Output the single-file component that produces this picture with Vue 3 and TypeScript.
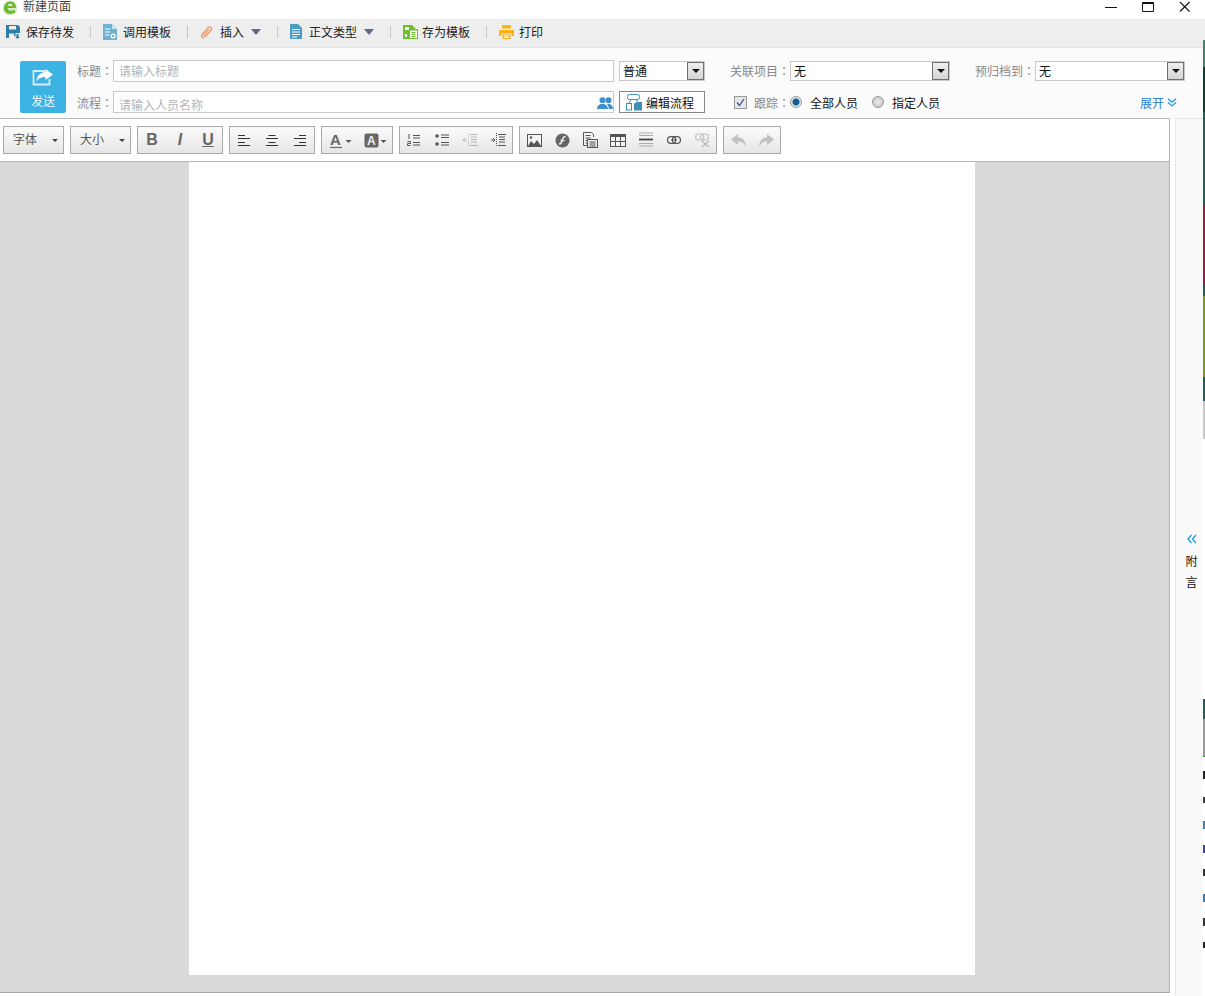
<template>
  <div class="win">
    <div class="titlebar">
      <svg class="logo" width="18" height="16" viewBox="0 0 18 16">
        <circle cx="9" cy="8" r="7.6" fill="#dfe8d8" />
        <path d="M3 8.5C3 4 6 1.5 9.5 1.5c3.5 0 5.5 2.5 5.5 6.5H6.5c.3 2.8 4 3.6 7.5 1.8v3C9.5 15 3 14 3 8.5z" fill="#6cbb2a" />
        <path d="M6.5 5.8h5.2C11.3 3.5 7.2 3.5 6.5 5.8z" fill="#fff" />
      </svg>
      <span class="title">新建页面</span>
      <div class="winbtns">
        <svg width="12" height="12" viewBox="0 0 12 12"><path d="M0 7.5h12" stroke="#111" /></svg>
        <svg width="12" height="12" viewBox="0 0 12 12"><path d="M.5 2.5h11v9H.5zM.5 3.5h11" fill="none" stroke="#111" /></svg>
        <svg width="12" height="12" viewBox="0 0 12 12"><path d="M1 2l9.5 9.500M10.500 2L1 11.500" stroke="#111" stroke-width="1.1" /></svg>
      </div>
    </div>

    <div class="actions">
      <div class="act act-save">
        <svg width="14" height="14" viewBox="0 0 14 14">
          <path d="M0 0h12l2 2v6H9.5v3H7v2H0z" fill="#2e7ea8" />
          <path d="M3 1h7v3.5H3z" fill="#eee" />
          <path d="M3 8.5h5V13H3z" fill="#eee" />
          <path d="M10.5 9h2v2.5H14L11.5 14 9 11.5h1.5z" fill="#2e7ea8" />
        </svg>
        <span>保存待发</span>
      </div>
      <i class="sep"></i>
      <div class="act act-tpl">
        <svg width="14" height="16" viewBox="0 0 14 16">
          <path d="M0 0h9l5 5v11H0z" fill="#6fb1d0" />
          <path d="M9 0v5h5z" fill="#cfe4ee" />
          <path d="M2 5h5M2 8h5M2 11h4" stroke="#fff" />
          <circle cx="10" cy="12" r="2.5" fill="#fff" />
          <circle cx="10" cy="12" r="1.2" fill="#6fb1d0" />
        </svg>
        <span>调用模板</span>
      </div>
      <i class="sep"></i>
      <div class="act act-ins">
        <svg width="14" height="14" viewBox="0 0 14 14">
          <path d="M4 13.2c-2 0-3.3-2-2-3.7l6-6.8c1.7-1.8 4.800.5 3 2.800L5.500 11.300c-1 1-2.300-.1-1.500-1.200l5-5.600" fill="none" stroke="#ee9a6b" stroke-width="1.3" />
        </svg>
        <span>插入</span>
        <i class="tri"></i>
      </div>
      <i class="sep"></i>
      <div class="act act-type">
        <svg width="12" height="15" viewBox="0 0 12 15">
          <path d="M0 0h8l4 4v11H0z" fill="#4c9cc4" />
          <path d="M2 5.5h8M2 8h8M2 10.5h8M2 13h5" stroke="#fff" />
        </svg>
        <span>正文类型</span>
        <i class="tri"></i>
      </div>
      <i class="sep"></i>
      <div class="act act-as">
        <svg width="15" height="14" viewBox="0 0 15 14">
          <path d="M0 0h9l3 3v1h3v10H0z" fill="#6cc12e" />
          <path d="M2 2h4v3H2zM2 9h2v3H2z" fill="#fff" />
          <path d="M7 5.5h7V13H7z" fill="#fff" />
          <path d="M8.500 7.500h4M8.500 9.500h4M8.500 11.500h4" stroke="#6cc12e" />
        </svg>
        <span>存为模板</span>
      </div>
      <i class="sep"></i>
      <div class="act act-print">
        <svg width="15" height="14" viewBox="0 0 15 14">
          <path d="M3 0h9v3.5H3z" fill="#fdb316" />
          <path d="M0 5h15v6h-2.5V8.500h-10V11H0z" fill="#fdb316" />
          <path d="M3.500 9.500h8V14h-8z" fill="#fdb316" />
          <path d="M5 11h5M5 12.500h5" stroke="#fff" />
        </svg>
        <span>打印</span>
      </div>
    </div>

    <div class="form">
      <div class="send">
        <svg width="22" height="17" viewBox="0 0 22 17">
          <path d="M13 2H1.500v13.500h16V10" fill="none" stroke="#d6eefa" stroke-width="1.8" />
          <path d="M13.500 0L21 5.500 13.500 11V8C9 8 6 9.500 4.500 12.500 4.500 7 8 3.500 13.500 3z" fill="#fff" />
        </svg>
        <span>发送</span>
      </div>
      <div class="fields">
        <div class="row">
          <label class="lab lab-l">标题<span class="colon">：</span></label>
          <div class="input ph">请输入标题</div>
          <div class="select sel-level"><span>普通</span><b class="arrow"></b></div>
          <label class="lab lab-wide">关联项目<span class="colon">：</span></label>
          <div class="select sel-proj"><span>无</span><b class="arrow"></b></div>
          <label class="lab lab-wide">预归档到<span class="colon">：</span></label>
          <div class="select sel-arch"><span>无</span><b class="arrow"></b></div>
        </div>
        <div class="row">
          <label class="lab lab-l lab-low">流程<span class="colon">：</span></label>
          <div class="input ph flow">
            <span>请输入人员名称</span>
            <svg class="people" width="16" height="12" viewBox="0 0 16 12">
              <circle cx="5.5" cy="3.2" r="3" fill="#3f8fcb" />
              <circle cx="11.5" cy="3.2" r="3" fill="#3f8fcb" />
              <path d="M0 12c0-3 2-5 5.500-5S11 9 11 12zM11.800 12c0-2-.5-3.500-1.800-4.800 3.500-1 6 1.300 6 4.800z" fill="#3f8fcb" />
            </svg>
          </div>
          <div class="flowbtn">
            <svg width="17" height="17" viewBox="0 0 17 17">
              <rect x="1.5" y=".5" width="12" height="5" rx="2" fill="none" stroke="#3f8fb5" />
              <path d="M5 5.500L3 9M10 5.500l2 3" stroke="#3f8fb5" />
              <rect x=".5" y="9.5" width="5" height="6.5" fill="none" stroke="#3f8fb5" />
              <path d="M8 9.500l3-1.500h5v8.500H8z" fill="#3f8fb5" />
            </svg>
            <span>编辑流程</span>
          </div>
          <span class="check">
            <svg width="13" height="13" viewBox="0 0 13 13">
              <rect x=".5" y=".5" width="12" height="12" fill="#e6e6ea" stroke="#9a9a9a" />
              <path d="M3 6.500l2.500 3L10 3" fill="none" stroke="#3c4a9e" stroke-width="1.3" />
            </svg>
          </span>
          <label class="lab lab-track">跟踪<span class="colon">：</span></label>
          <i class="radio on"></i>
          <span class="opt opt1">全部人员</span>
          <i class="radio"></i>
          <span class="opt">指定人员</span>
          <span class="expand">展开
            <svg width="10" height="9" viewBox="0 0 10 9"><path d="M1 .8l4 3.400L9 .8M1 4.500l4 3.400 4-3.400" fill="none" stroke="#1c9cea" stroke-width="1.3" /></svg>
          </span>
        </div>
      </div>
    </div>

    <div class="main">
      <div class="editor">
        <div class="tools">
          <div class="group combo"><span>字体</span><i class="caret"></i></div>
          <div class="group combo"><span>大小</span><i class="caret"></i></div>

          <div class="group">
            <span class="tb letter b">B</span>
            <span class="tb letter it">I</span>
            <span class="tb letter u">U</span>
          </div>

          <div class="group">
            <span v-for="a in aligns" :key="a" class="tb">
              <svg width="12" height="13" viewBox="0 0 12 13">
                <path :d="a" stroke="#333" stroke-width="1.2" fill="none" />
              </svg>
            </span>
          </div>

          <div class="group colors">
            <span class="tb wide">
              <svg width="24" height="17" viewBox="0 0 24 17">
                <text x="2" y="13" font-family="Liberation Sans" font-weight="700" font-size="15" fill="#666">A</text>
                <path d="M2 15.500h12" stroke="#666" stroke-width="1.2" />
                <path d="M17.500 8h6l-3 3z" fill="#555" />
              </svg>
            </span>
            <span class="tb wide">
              <svg width="24" height="17" viewBox="0 0 24 17">
                <rect x="1.5" y="1.5" width="14" height="14" rx="2" fill="#666" />
                <text x="4" y="13" font-family="Liberation Sans" font-weight="700" font-size="12" fill="#eee">A</text>
                <path d="M17.500 8h6l-3 3z" fill="#555" />
              </svg>
            </span>
          </div>

          <div class="group">
            <span class="tb">
              <svg width="14" height="14" viewBox="0 0 14 14">
                <path d="M6 2.500h7M6 5h7M6 9.500h7M6 12h7" stroke="#555" />
                <path d="M2 1v5M.5 8.500h3v2h-3v2h3" fill="none" stroke="#555" />
              </svg>
            </span>
            <span class="tb">
              <svg width="14" height="14" viewBox="0 0 14 14">
                <circle cx="2" cy="3" r="1.8" fill="#555" />
                <circle cx="2" cy="11" r="1.8" fill="#555" />
                <path d="M6 2h8M6 4.500h8M6 9.500h8M6 12h8" stroke="#555" />
              </svg>
            </span>
            <span class="tb faded">
              <svg width="15" height="14" viewBox="0 0 15 14">
                <path d="M7 1.500h8M8 4h6M8 6.500h6M8 9h6M7 12.500h8" stroke="#777" />
                <path d="M5.500 0v14" stroke="#777" stroke-dasharray="1 1" />
                <path d="M0 7h4M2 5L0 7l2 2" fill="none" stroke="#777" />
              </svg>
            </span>
            <span class="tb">
              <svg width="15" height="14" viewBox="0 0 15 14">
                <path d="M7 1.500h8M8 4h6M8 6.500h6M8 9h6M7 12.500h8" stroke="#555" />
                <path d="M5.500 0v14" stroke="#555" stroke-dasharray="1 1" />
                <path d="M0 7h4M2 5l2 2-2 2" fill="none" stroke="#555" />
              </svg>
            </span>
          </div>

          <div class="group">
            <span class="tb">
              <svg width="15" height="13" viewBox="0 0 15 13">
                <rect x=".5" y=".5" width="14" height="12" fill="#f4f4f4" stroke="#555" />
                <path d="M1 12l3-5 3 3 3-4 4 6z" fill="#555" />
                <circle cx="4" cy="3.5" r="1.3" fill="#555" />
              </svg>
            </span>
            <span class="tb">
              <svg width="15" height="15" viewBox="0 0 15 15">
                <circle cx="7.5" cy="7.5" r="7" fill="#666" />
                <path d="M10.500 3.500C7.800 3.500 7.500 5.500 7 8c-.4 2-1 3-3 3M5.500 7.500h4" fill="none" stroke="#eee" stroke-width="1.3" />
              </svg>
            </span>
            <span class="tb">
              <svg width="15" height="16" viewBox="0 0 15 16">
                <path d="M.5.500h8l2 2V5M.5.500v13H4" fill="none" stroke="#555" />
                <path d="M2.500 3.500h5M2.500 6h5M2.500 8.500h2M2.500 11h1.500" stroke="#555" />
                <rect x="4.5" y="7.5" width="10" height="8" fill="#eee" stroke="#555" />
                <path d="M6.500 10h6M6.500 12h6M6.500 14h6" stroke="#555" />
              </svg>
            </span>
            <span class="tb">
              <svg width="16" height="13" viewBox="0 0 16 13">
                <rect x=".5" y=".5" width="15" height="12" fill="#f4f4f4" stroke="#555" />
                <path d="M0 .5h16V3H0z" fill="#555" />
                <path d="M5.500 3v9M10.500 3v9M1 7.500h14" stroke="#555" />
              </svg>
            </span>
            <span class="tb">
              <svg width="14" height="16" viewBox="0 0 14 16">
                <path d="M0 1h14M0 3.500h14M0 11.500h14M0 14h14" stroke="#aaa" />
                <path d="M0 7.500h14" stroke="#444" stroke-width="1.8" />
              </svg>
            </span>
            <span class="tb">
              <svg width="14" height="8" viewBox="0 0 14 8">
                <rect x=".6" y=".6" width="8" height="6.8" rx="3.2" fill="none" stroke="#555" stroke-width="1.2" />
                <rect x="5.4" y=".6" width="8" height="6.8" rx="3.2" fill="none" stroke="#555" stroke-width="1.2" />
                <path d="M4 4h6" stroke="#555" />
              </svg>
            </span>
            <span class="tb faded">
              <svg width="15" height="14" viewBox="0 0 15 14">
                <rect x=".7" y="1" width="8" height="6" rx="2.5" fill="none" stroke="#888" stroke-width="1.2" />
                <rect x="5.5" y="1" width="8" height="6" rx="2.5" fill="none" stroke="#888" stroke-width="1.2" />
                <path d="M7 8l7 6M14 8l-7 6" stroke="#777" stroke-width="1.4" />
              </svg>
            </span>
          </div>

          <div class="group">
            <span class="tb faded">
              <svg width="15" height="13" viewBox="0 0 15 13">
                <path d="M7 0L0 5.500 7 11V7.500c3.500 0 6 1.300 8 5C14.800 7 11.500 3.500 7 3.300z" fill="#888" />
              </svg>
            </span>
            <span class="tb faded">
              <svg width="15" height="13" viewBox="0 0 15 13">
                <path d="M8 0l7 5.500L8 11V7.500c-3.500 0-6 1.300-8 5C.2 7 3.500 3.500 8 3.300z" fill="#888" />
              </svg>
            </span>
          </div>
        </div>
        <div class="canvas">
          <div class="paper"></div>
        </div>
      </div>

      <div class="aside">
        <svg width="10" height="10" viewBox="0 0 10 10"><path d="M4.500 1L1 5l3.500 4M9 1L5.500 5 9 9" fill="none" stroke="#1c9cea" stroke-width="1.3" /></svg>
        <span class="aside-t">附</span>
        <span class="aside-t">言</span>
      </div>
    </div>

    <div class="strip">
      <i v-for="(s, n) in strip" :key="n" :style="{ height: s.h + 'px', background: s.c }"></i>
    </div>
  </div>
</template>

<script setup lang="ts">
const aligns: string[] = [
  "M0 1.5h7M0 4.5h12M0 8.5h7M0 11.5h12",
  "M2.5 1.5h7M0 4.5h12M2.5 8.5h7M0 11.5h12",
  "M5 1.5h7M0 4.5h12M5 8.5h7M0 11.5h12",
];

// colored edge of whatever window sat behind this one, top to bottom from y=40
const strip: { h: number; c: string }[] = [
  { h: 27, c: "#3d8a6e" },
  { h: 45, c: "#123a30" },
  { h: 93, c: "#1f5f5c" },
  { h: 81, c: "#a0154e" },
  { h: 10, c: "#1f5f5c" },
  { h: 81, c: "#7f9f0a" },
  { h: 24, c: "#1f5f5c" },
  { h: 38, c: "#c8c8c8" },
  { h: 260, c: "#ffffff" },
  { h: 20, c: "#1f5f5c" },
  { h: 37, c: "#9a9a9a" },
  { h: 1, c: "#2f8f2a" },
  { h: 14, c: "#ffffff" },
  { h: 8, c: "#222222" },
  { h: 18, c: "#ffffff" },
  { h: 6, c: "#444444" },
  { h: 18, c: "#ffffff" },
  { h: 8, c: "#3a7db0" },
  { h: 16, c: "#ffffff" },
  { h: 8, c: "#3b4a9a" },
  { h: 16, c: "#ffffff" },
  { h: 7, c: "#333333" },
  { h: 18, c: "#ffffff" },
  { h: 8, c: "#3a7db0" },
  { h: 16, c: "#ffffff" },
  { h: 8, c: "#333333" },
  { h: 16, c: "#ffffff" },
  { h: 6, c: "#222222" },
];
</script>

<style>
html,
body {
  margin: 0;
  background: #fff;
  overflow: hidden;
}
</style>

<style scoped>
.win {
  width: 1205px;
  height: 996px;
  position: relative;
  display: flex;
  flex-direction: column;
  font-family: "Noto Sans CJK SC", "Liberation Sans", sans-serif;
  font-size: 12px;
  color: #222;
  overflow: hidden;
}
.titlebar {
  height: 19px;
  display: flex;
  align-items: flex-start;
  background: #fff;
  flex: none;
}
.logo {
  margin-left: 1px;
}
.title {
  margin-left: 4px;
  font-family: "Liberation Sans", "Noto Sans CJK SC", sans-serif;
  line-height: 14px;
  color: #444;
}
.winbtns {
  margin-left: auto;
  margin-right: 14px;
  display: flex;
  gap: 25px;
}
.actions {
  height: 28px;
  background: #eeeeee;
  border-bottom: 1px solid #e4e4e4;
  display: flex;
  align-items: center;
  flex: none;
}
.act {
  display: flex;
  align-items: center;
  margin-top: -3px;
}
.act svg {
  margin-right: 6px;
}
.act-type svg {
  margin-right: 7px;
}
.act-as svg {
  margin-right: 4px;
}
.act-print svg {
  margin-right: 5px;
}
.act-save {
  padding-left: 6px;
}
.sep {
  width: 1px;
  height: 12px;
  background: #c4c4c4;
  margin: -3px 12px 0 16px;
  flex: none;
}
.tri {
  width: 0;
  height: 0;
  border-left: 5px solid transparent;
  border-right: 5px solid transparent;
  border-top: 6px solid #5e6b85;
  margin-left: 7px;
}
.form {
  height: 70px;
  background: #fbfbfb;
  display: flex;
  flex: none;
  box-sizing: border-box;
  padding: 12px 0 0 20px;
}
.send {
  width: 46px;
  height: 52px;
  margin-top: 1px;
  background: #3db3e3;
  border-radius: 2px;
  color: #e9f7fd;
  display: flex;
  flex-direction: column;
  align-items: center;
  padding-top: 8px;
  box-sizing: border-box;
  flex: none;
}
.send span {
  margin-top: 7px;
  line-height: 16px;
}
.fields {
  margin-left: 11px;
  display: flex;
  flex-direction: column;
  gap: 9px;
}
.row {
  display: flex;
  align-items: center;
  height: 22px;
}
.lab {
  color: #888;
  white-space: nowrap;
}
.colon {
  font-family: "Noto Sans CJK TC", sans-serif;
}
.lab-l {
  width: 36px;
  flex: none;
  margin-top: -2px;
}
.lab-low {
  margin-top: 0;
  padding-top: 1px;
}
.input {
  width: 501px;
  height: 22px;
  border: 1px solid #c9c9c9;
  background: #fff;
  box-sizing: border-box;
  padding: 0 0 2px 5px;
  display: flex;
  align-items: center;
  flex: none;
}
.ph {
  color: #b4b4b4;
}
.flow {
  position: relative;
  align-items: flex-end;
  overflow: hidden;
  padding-bottom: 0;
}
.flow > span {
  line-height: 16px;
  margin-bottom: -1px;
}
.people {
  position: absolute;
  right: 0;
  top: 5px;
}
.select {
  height: 20px;
  border: 1px solid #c8c8c8;
  background: #fff;
  box-sizing: border-box;
  display: flex;
  align-items: center;
  justify-content: space-between;
  padding-left: 3px;
  flex: none;
  color: #111;
}
.select span {
  margin-top: -2px;
}
.arrow {
  width: 17px;
  height: 18px;
  border: 1px solid #707070;
  background: linear-gradient(#eee, #d4d4d4);
  box-sizing: border-box;
  position: relative;
}
.arrow::after {
  content: "";
  position: absolute;
  left: 3.5px;
  top: 6px;
  border-left: 4px solid transparent;
  border-right: 4px solid transparent;
  border-top: 4px solid #111;
}
.sel-level {
  width: 86px;
  margin-left: 5px;
}
.lab-wide {
  margin-left: 25px;
  margin-top: -2px;
  width: 60px;
  flex: none;
}
.sel-proj {
  width: 160px;
}
.sel-arch {
  width: 150px;
}
.flowbtn {
  margin-left: 5px;
  width: 86px;
  height: 22px;
  border: 1px solid #888;
  background: #fff;
  box-sizing: border-box;
  display: flex;
  align-items: center;
  padding-left: 6px;
  gap: 3px;
  flex: none;
  color: #111;
}
.check {
  margin-left: 29px;
  display: flex;
}
.lab-track {
  margin-left: 7px;
  width: 36px;
  flex: none;
}
.radio {
  width: 12px;
  height: 12px;
  border-radius: 50%;
  border: 1px solid #999;
  background: radial-gradient(#eee, #bbb);
  box-sizing: border-box;
  flex: none;
}
.radio.on {
  background: radial-gradient(#0f5f9c 0 3px, #e4e4e4 4px);
}
.opt {
  margin-left: 8px;
  color: #111;
  white-space: nowrap;
}
.opt1 {
  margin-right: 14px;
}
.expand {
  margin-left: auto;
  margin-right: 8px;
  color: #2f7fd0;
  display: flex;
  align-items: center;
  gap: 3px;
  white-space: nowrap;
}
.main {
  flex: 1;
  display: flex;
  min-height: 0;
}
.editor {
  width: 1170px;
  height: 875px;
  border-top: 1px solid #b9b9b9;
  border-right: 1px solid #b4b4b4;
  border-bottom: 1px solid #aaa;
  box-sizing: border-box;
  display: flex;
  flex-direction: column;
  flex: none;
}
.tools {
  height: 43px;
  flex: none;
  box-sizing: border-box;
  background: #fff;
  border-bottom: 1px solid #b9b9b9;
  padding: 7px 0 0 3px;
  display: flex;
  gap: 6px;
  align-items: flex-start;
}
.group {
  height: 28px;
  border: 1px solid #aaa;
  box-sizing: border-box;
  background: linear-gradient(#fbfbfb, #e6e6e6);
  display: flex;
  align-items: center;
}
.combo {
  width: 61px;
  padding: 0 0 3px 9px;
  color: #555;
  position: relative;
}
.caret {
  position: absolute;
  right: 5px;
  top: 12px;
  border-left: 3.5px solid transparent;
  border-right: 3.5px solid transparent;
  border-top: 3.5px solid #444;
}
.tb {
  width: 28px;
  height: 26px;
  display: flex;
  align-items: center;
  justify-content: center;
}
.tb.wide {
  width: 35px;
}
.faded {
  opacity: 0.45;
}
.letter {
  font-family: "Liberation Sans", sans-serif;
  font-size: 16px;
  font-weight: 700;
  color: #666;
}
.it {
  font-style: italic;
}
.u {
  text-decoration: underline;
}
.canvas {
  flex: 1;
  background: #d8d9db;
  padding-left: 189px;
  min-height: 0;
}
.paper {
  width: 786px;
  height: 813px;
  background: #fff;
}
.aside {
  margin-left: 5px;
  width: 28px;
  box-sizing: border-box;
  border-left: 1px solid #e6e6e6;
  border-top: 1px solid #e6e6e6;
  background: #fafafa;
  display: flex;
  flex-direction: column;
  align-items: center;
  padding: 415px 0 0 4px;
  flex: none;
}
.aside-t {
  color: #111;
  line-height: 21px;
}
.aside svg {
  margin-bottom: 6px;
}
.strip {
  position: absolute;
  top: 40px;
  right: 0;
  width: 2px;
  display: flex;
  flex-direction: column;
}
.strip i {
  display: block;
  flex: none;
}
</style>
